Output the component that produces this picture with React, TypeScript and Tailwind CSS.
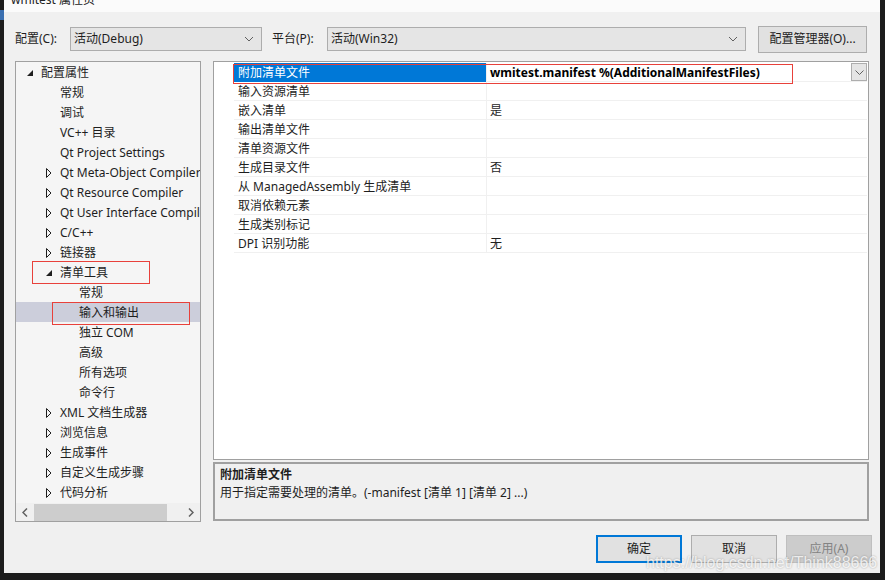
import React from "react";

const FONT = { fontFamily: '"Noto Sans", "Noto Sans CJK SC", sans-serif' };

type Node = { label: string; level: number; arrow?: "open" | "closed"; selected?: boolean };

const tree: Node[] = [
  { label: "配置属性", level: 0, arrow: "open" },
  { label: "常规", level: 1 },
  { label: "调试", level: 1 },
  { label: "VC++ 目录", level: 1 },
  { label: "Qt Project Settings", level: 1 },
  { label: "Qt Meta-Object Compiler", level: 1, arrow: "closed" },
  { label: "Qt Resource Compiler", level: 1, arrow: "closed" },
  { label: "Qt User Interface Compiler", level: 1, arrow: "closed" },
  { label: "C/C++", level: 1, arrow: "closed" },
  { label: "链接器", level: 1, arrow: "closed" },
  { label: "清单工具", level: 1, arrow: "open" },
  { label: "常规", level: 2 },
  { label: "输入和输出", level: 2, selected: true },
  { label: "独立 COM", level: 2 },
  { label: "高级", level: 2 },
  { label: "所有选项", level: 2 },
  { label: "命令行", level: 2 },
  { label: "XML 文档生成器", level: 1, arrow: "closed" },
  { label: "浏览信息", level: 1, arrow: "closed" },
  { label: "生成事件", level: 1, arrow: "closed" },
  { label: "自定义生成步骤", level: 1, arrow: "closed" },
  { label: "代码分析", level: 1, arrow: "closed" },
];

const props: [string, string][] = [
  ["附加清单文件", "wmitest.manifest %(AdditionalManifestFiles)"],
  ["输入资源清单", ""],
  ["嵌入清单", "是"],
  ["输出清单文件", ""],
  ["清单资源文件", ""],
  ["生成目录文件", "否"],
  ["从 ManagedAssembly 生成清单", ""],
  ["取消依赖元素", ""],
  ["生成类别标记", ""],
  ["DPI 识别功能", "无"],
];

function Chevron() {
  return (
    <svg width="10" height="6" viewBox="0 0 10 6" className="shrink-0">
      <path d="M1 1 L5 5 L9 1" fill="none" stroke="#606060" strokeWidth="1" />
    </svg>
  );
}

function Arrow({ kind }: { kind: "open" | "closed" }) {
  if (kind === "open") {
    return (
      <svg width="7" height="7" viewBox="0 0 7 7">
        <path d="M6 0 L6 6 L0 6 Z" fill="#1e1e1e" />
      </svg>
    );
  }
  return (
    <svg width="6" height="10" viewBox="0 0 6 10">
      <path d="M0.5 0.5 L5 5 L0.5 9.5 Z" fill="none" stroke="#1e1e1e" strokeWidth="1" />
    </svg>
  );
}

function Select({ text, width }: { text: string; width: string }) {
  return (
    <div className={`${width} h-[24px] border border-[#adadad] bg-[#e5e5e5] flex items-center justify-between pl-[3px] pr-[7px]`}>
      <span>{text}</span>
      <Chevron />
    </div>
  );
}

export default function App() {
  return (
    <div className="w-[885px] h-[580px] bg-[#1c1c1c] flex overflow-hidden text-[12px] text-[#1e1e1e]" style={FONT}>
      <div className="w-[4px] flex flex-col">
        <div className="h-[10px]" />
        <div className="h-[10px] bg-[#3a6fb0]" />
      </div>
      <div className="w-[876px] h-[573px] bg-[#f0f0f0] flex flex-col relative">
        {/* title bar */}
        <div className="h-[12px] bg-[#fbfbfb] overflow-hidden relative">
          <span className="absolute left-[7px] top-[-9px] text-[12px] text-[#222]">wmitest 属性页</span>
        </div>

        {/* toolbar */}
        <div className="flex items-center h-[28px] mt-[13px] pl-[11px]">
          <span className="w-[55px]">配置(C):</span>
          <Select text="活动(Debug)" width="w-[192px]" />
          <span className="ml-[10px] w-[55px]">平台(P):</span>
          <Select text="活动(Win32)" width="w-[419px]" />
          <div className="ml-[12px] w-[109px] h-[27px] border border-[#adadad] bg-[#e1e1e1] flex items-center justify-center">
            配置管理器(O)...
          </div>
        </div>

        {/* main */}
        <div className="flex mt-[8px] pl-[11px] gap-[12px]">
          {/* tree */}
          <div className="w-[186px] h-[461px] border border-[#a0a0a0] bg-[#f5f5f5] flex flex-col relative">
            <div className="flex-1 overflow-hidden">
              {tree.map((n, i) => (
                <div
                  key={i}
                  className={`h-[20px] pt-[2px] flex items-center whitespace-nowrap ${n.selected ? "bg-[#cccedb]" : ""}`}
                  style={{ paddingLeft: 11 + n.level * 19 }}
                >
                  <span className="w-[14px] shrink-0 flex items-center">
                    {n.arrow && <Arrow kind={n.arrow} />}
                  </span>
                  <span className="shrink-0">{n.label}</span>
                </div>
              ))}
            </div>
            <div className="h-[18px] bg-[#f0f0f0] flex items-center">
              <span className="w-[18px] flex justify-center">
                <svg width="6" height="9" viewBox="0 0 6 9"><path d="M5 0.5 L1 4.5 L5 8.5" fill="none" stroke="#606060" strokeWidth="1.5" /></svg>
              </span>
              <div className="w-[133px] h-[17px] bg-[#cdcdcd]" />
              <div className="flex-1" />
              <span className="w-[18px] flex justify-center">
                <svg width="6" height="9" viewBox="0 0 6 9"><path d="M1 0.5 L5 4.5 L1 8.5" fill="none" stroke="#606060" strokeWidth="1.5" /></svg>
              </span>
            </div>
            <div className="absolute left-[16px] top-[199px] w-[118px] h-[23px] border border-[#e8413b]" />
            <div className="absolute left-[36px] top-[240px] w-[138px] h-[23px] border border-[#e8413b]" />
          </div>

          {/* right */}
          <div className="w-[656px] flex flex-col gap-[2px]">
            <div className="h-[399px] border border-[#a0a0a0] bg-white pt-[1px] relative">
              {props.map(([k, v], i) => (
                <div key={i} className="h-[19px] flex">
                  <div className="w-[20px] shrink-0" />
                  <div
                    className={`w-[252px] shrink-0 pl-[4px] pt-[2px] flex items-center border-b ${
                      i === 0 ? "bg-[#0078d7] text-white border-[#0078d7]" : "border-[#f0f0f0]"
                    }`}
                  >
                    {k}
                  </div>
                  <div className="flex-1 flex items-center border-b border-l border-[#f0f0f0] pl-[3px] mr-[1px]">
                    <span className={`pt-[2px] ${i === 0 ? "font-bold text-black" : ""}`}>{v}</span>
                    {i === 0 && (
                      <div className="ml-auto w-[16px] h-[18px] border border-[#adadad] bg-[#e5e5e5] flex items-center justify-center">
                        <svg width="9" height="5" viewBox="0 0 9 5"><path d="M0.5 0.5 L4.5 4.5 L8.5 0.5" fill="none" stroke="#606060" strokeWidth="1" /></svg>
                      </div>
                    )}
                  </div>
                </div>
              ))}
              <div className="absolute left-[19px] top-[2px] w-[560px] h-[20px] border border-[#e8413b]" />
            </div>
            <div className="h-[59px] border-2 border-[#a0a0a0] bg-[#f0f0f0] px-[5px] pt-[2px] leading-[18px]">
              <div className="font-bold">附加清单文件</div>
              <div>用于指定需要处理的清单。(-manifest [清单 1] [清单 2] ...)</div>
            </div>
          </div>
        </div>

        {/* buttons */}
        <div className="flex justify-end gap-[9px] mt-[13px] pr-[8px]">
          <div className="w-[86px] h-[28px] border-2 border-[#0078d7] bg-[#e1e1e1] flex items-center justify-center">确定</div>
          <div className="w-[86px] h-[28px] border border-[#adadad] bg-[#e1e1e1] flex items-center justify-center">取消</div>
          <div className="w-[86px] h-[28px] border border-[#bfbfbf] bg-[#cccccc] text-[#838383] flex items-center justify-center">应用(A)</div>
        </div>

        <div
          className="absolute left-[642px] top-[551px] text-[16px] text-white/80 whitespace-nowrap"
          style={{ fontFamily: '"Liberation Sans", Arial, sans-serif', textShadow: "0 0 2px rgba(0,0,0,0.35)" }}
        >
          https://blog.csdn.net/Think88666
        </div>
      </div>
    </div>
  );
}
